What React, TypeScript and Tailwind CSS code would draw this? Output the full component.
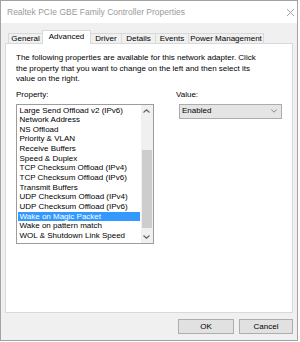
const tabs = [
  { label: 'General', width: 'w-[34px]' },
  { label: 'Advanced', width: 'w-[49px]', active: true },
  { label: 'Driver', width: 'w-[30px]' },
  { label: 'Details', width: 'w-[34px]' },
  { label: 'Events', width: 'w-[33px]' },
  { label: 'Power Management', width: 'w-[76px]' },
];

const properties = [
  'Large Send Offload v2 (IPv6)',
  'Network Address',
  'NS Offload',
  'Priority & VLAN',
  'Receive Buffers',
  'Speed & Duplex',
  'TCP Checksum Offload (IPv4)',
  'TCP Checksum Offload (IPv6)',
  'Transmit Buffers',
  'UDP Checksum Offload (IPv4)',
  'UDP Checksum Offload (IPv6)',
  'Wake on Magic Packet',
  'Wake on pattern match',
  'WOL & Shutdown Link Speed',
];

const selected = 'Wake on Magic Packet';

function Chevron({ up }: { up?: boolean }) {
  return (
    <svg width="7" height="4" viewBox="0 0 7 4" className="block">
      <path
        d={up ? 'M0.5 3.5 L3.5 0.8 L6.5 3.5' : 'M0.5 0.5 L3.5 3.2 L6.5 0.5'}
        fill="none"
        stroke="#606060"
        strokeWidth="1.1"
      />
    </svg>
  );
}

export default function App() {
  return (
    <div className="h-[342px] w-[300px] bg-white font-['Liberation_Sans',Arial,sans-serif] text-[8px] text-black">
      <div className="flex h-[341px] w-[298px] flex-col border border-[#a3a3a3] bg-[#f0f0f0]">
        {/* title bar */}
        <div className="flex h-[22px] items-center justify-between bg-white pl-[6px] pr-[3px]">
          <span className="text-[8.5px] text-[#9a9a9a]">
            Realtek PCIe GBE Family Controller Properties
          </span>
          <svg width="7" height="7" viewBox="0 0 7 7" className="block">
            <path d="M0 0 L7 7 M7 0 L0 7" stroke="#9a9a9a" strokeWidth="0.9" />
          </svg>
        </div>

        {/* tabs */}
        <div className="mt-[7px] flex h-[13px] items-end pl-[7px]">
          {tabs.map((tab, i) =>
            tab.active ? (
              <div
                key={tab.label}
                className={`relative z-10 -mb-px flex h-[14px] items-center justify-center border-x border-t border-[#d9d9d9] bg-white pb-[1px] ${tab.width}`}
              >
                {tab.label}
              </div>
            ) : (
              <div
                key={tab.label}
                className={`flex h-[10px] items-center justify-center border-t border-[#d9d9d9] bg-[#f0f0f0] ${tab.width} ${
                  i === 0 ? 'border-l' : ''
                } ${i > 2 ? 'border-l' : ''} ${i === tabs.length - 1 ? 'border-r' : ''}`}
              >
                {tab.label}
              </div>
            )
          )}
        </div>

        {/* panel */}
        <div className="mx-[4px] h-[270px] border border-[#d9d9d9] bg-white px-[10px] pt-[9px]">
          <p className="leading-[10.5px]">
            The following properties are available for this network adapter. Click
            <br />
            the property that you want to change on the left and then select its
            <br />
            value on the right.
          </p>

          <div className="mt-[5.5px] flex gap-[22px]">
            <div className="w-[140px]">
              <div className="leading-[10.5px]">Property:</div>
              <div className="mt-[3px] flex h-[140px] border border-[#9c9c9c] bg-white">
                <ul className="flex-1 px-[1px] pt-[1px]">
                  {properties.map((p) => (
                    <li
                      key={p}
                      className={`h-[9.65px] whitespace-nowrap pl-[1.5px] leading-[9.65px] ${
                        p === selected ? 'bg-[#3399ff] text-white' : ''
                      }`}
                    >
                      {p}
                    </li>
                  ))}
                </ul>
                <div className="flex w-[12.5px] flex-col bg-[#f0f0f0]">
                  <div className="flex h-[12px] items-center justify-center">
                    <Chevron up />
                  </div>
                  <div className="h-[33px]" />
                  <div className="mx-[1px] h-[78px] bg-[#cdcdcd]" />
                  <div className="flex-1" />
                  <div className="flex h-[12px] items-center justify-center">
                    <Chevron />
                  </div>
                </div>
              </div>
            </div>

            <div>
              <div className="leading-[10.5px]">Value:</div>
              <div className="ml-[3px] mt-[3px] flex h-[15px] w-[103px] items-center justify-between border border-[#acacac] bg-[#e5e5e5] pl-[2px] pr-[4px]">
                <span>Enabled</span>
                <svg width="6" height="4" viewBox="0 0 6 4" className="block">
                  <path d="M0.3 0.6 L3 3.2 L5.7 0.6" fill="none" stroke="#707070" strokeWidth="0.8" />
                </svg>
              </div>
            </div>
          </div>
        </div>

        {/* buttons */}
        <div className="mt-[6px] flex justify-end gap-[5px] px-[4px]">
          <button className="flex h-[15px] w-[56px] items-center justify-center border border-[#adadad] bg-[#e1e1e1]">
            OK
          </button>
          <button className="flex h-[15px] w-[54px] items-center justify-center border border-[#adadad] bg-[#e1e1e1]">
            Cancel
          </button>
        </div>
      </div>
    </div>
  );
}
